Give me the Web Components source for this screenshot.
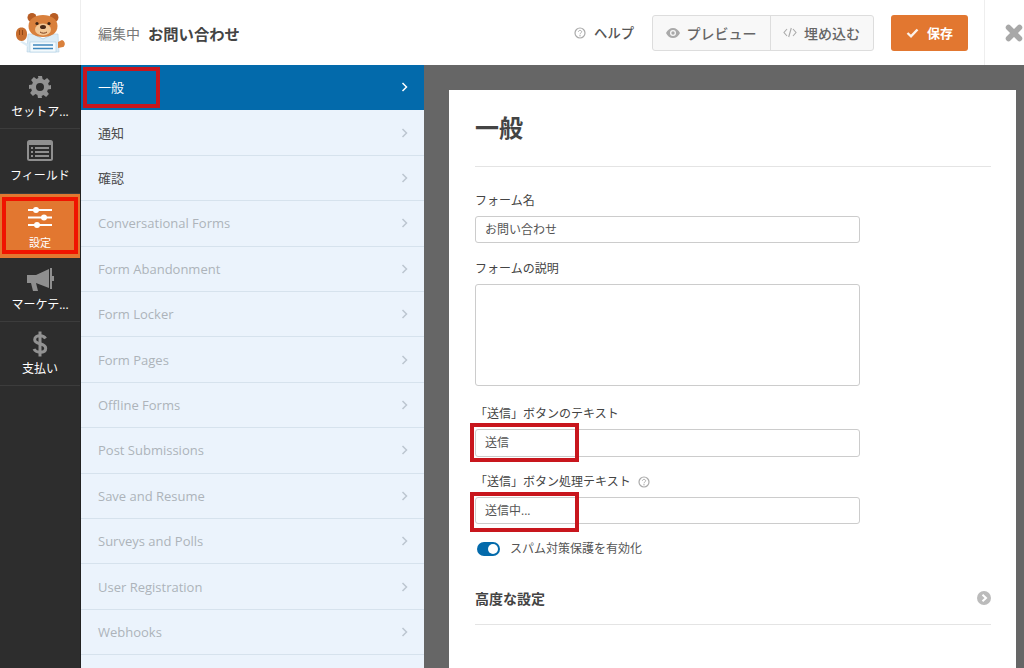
<!DOCTYPE html>
<html lang="ja"><head><meta charset="utf-8"><title>フォーム</title>
<style>
html,body{margin:0;padding:0;height:100%;overflow:hidden}
body{font-family:"Open Sans","Noto Sans CJK JP",sans-serif;background:#666}
</style></head><body>
<wf-app></wf-app>
<script>
const FONT='"Open Sans","Noto Sans CJK JP",sans-serif';
function def(name,html){
  customElements.define(name,class extends HTMLElement{
    constructor(){super();this.attachShadow({mode:'open'}).innerHTML=typeof html==='function'?html(this):html;}
  });
}
const BEAR=`<svg width="52" height="42" viewBox="0 0 52 42" aria-hidden="true">
<path d="M14 22h30l1 18H13z" fill="#dcecf6" stroke="#b9d4e6" stroke-width=".6"/>
<path d="M21 23l8 4 8-4z" fill="#fff" stroke="#a8c8dd" stroke-width=".8"/>
<rect x="16" y="30" width="26" height="10" fill="#f4fafd" stroke="#9fc6df" stroke-width=".5"/>
<path d="M19 33h20M19 36.500h20" stroke="#3f88bd" stroke-width="1.500"/>
<circle cx="18" cy="5.500" r="4.500" fill="#b85d24"/><circle cx="40" cy="5.500" r="4.500" fill="#b85d24"/>
<path d="M14.500 14c0-7 6.500-11 14.500-11s14.500 4 14.500 11-6 11-14.500 11-14.500-4-14.500-11z" fill="#d9803c"/>
<ellipse cx="29" cy="17.500" rx="8" ry="6" fill="#f3c795"/>
<circle cx="23" cy="11.500" r="1.600" fill="#3c2415"/><circle cx="35" cy="11.500" r="1.600" fill="#3c2415"/>
<ellipse cx="29" cy="15" rx="3" ry="2" fill="#4a2a18"/>
<path d="M26 20c2 1.600 5 1.600 7 0" stroke="#7a3d1c" fill="none" stroke-width="1"/>
<path d="M2 22c0-4 2-6.500 5.500-6.500S13 18 13 22s-2 7-5.500 7S2 26 2 22z" fill="#c96f30"/>
<path d="M5.500 18v5M8.500 18v5" stroke="#8d4719" stroke-width="1"/>
<path d="M8 29l6 3v3L6 30z" fill="#dcecf6"/>
<path d="M44 30l4-2c3 1 4 5 1 7l-5 1z" fill="#d9803c"/>
</svg>`;
const I={
 gear:`<svg width="24" height="24" viewBox="0 0 24 24"><path fill="#929292" fill-rule="evenodd" d="M10 1h4l.6 3.100 1.900.8 2.600-1.800 2.800 2.800-1.800 2.600.8 1.900L23 10v4l-3.100.6-.8 1.900 1.800 2.600-2.800 2.800-2.600-1.800-1.900.8L14 23h-4l-.6-3.100-1.900-.8-2.600 1.800-2.800-2.800 1.800-2.600-.8-1.900L1 14v-4l3.100-.6.8-1.900-1.800-2.600 2.800-2.800 2.600 1.800 1.900-.8zM12 8a4 4 0 1 0 0 8 4 4 0 0 0 0-8z"/></svg>`,
 list:`<svg width="26" height="21" viewBox="0 0 26 21"><rect width="26" height="21" rx="2.500" fill="#8f8f8f"/><rect x="2" y="5" width="22" height="14" fill="#2d2d2d"/><path d="M4 8h2M8 8h14M4 12h2M8 12h14M4 16h2M8 16h14" stroke="#8f8f8f" stroke-width="1.800"/></svg>`,
 sliders:`<svg width="24" height="21" viewBox="0 0 24 21"><path d="M0 3h24M0 10.500h24M0 18h24" stroke="#fff" stroke-width="2"/><circle cx="8" cy="3" r="3" fill="#fff"/><circle cx="16" cy="10.500" r="3" fill="#fff"/><circle cx="9" cy="18" r="3" fill="#fff"/></svg>`,
 horn:`<svg width="27" height="23" viewBox="0 0 27 23"><path fill="#8f8f8f" d="M0 7h9L22 1v19L9 15H0z"/><path fill="#8f8f8f" d="M4 15h5l2 8H6z"/><path fill="#8f8f8f" d="M23 0h2v21h-2zM25 8h2v5h-2z"/></svg>`,
 dollar:`<svg width="16" height="26" viewBox="0 0 16 26"><path d="M13.500 7.500C12.500 5.500 10.500 4.800 8 4.800c-3 0-5.300 1.400-5.300 3.900 0 5.300 11 2.700 11 8.500 0 2.600-2.500 4-5.700 4-2.800 0-5-1-6-3.200" fill="none" stroke="#929292" stroke-width="3"/><path d="M8 .5v25" stroke="#929292" stroke-width="3"/></svg>`,
 help:`<svg width="12" height="12" viewBox="0 0 12 12"><circle cx="6" cy="6" r="5" fill="none" stroke="#aaa" stroke-width="1.200"/><path d="M4.400 4.800C4.500 3.800 5.200 3.400 6 3.400c.9 0 1.600.5 1.600 1.300C7.600 6 6 6 6 7.300" fill="none" stroke="#aaa"/><circle cx="6" cy="8.800" r=".7" fill="#aaa"/></svg>`,
 eye:`<svg width="14" height="10" viewBox="0 0 14 10"><path fill-rule="evenodd" fill="#aaa" d="M7 0c3 0 5.600 2 7 5-1.400 3-4 5-7 5S1.400 8 0 5c1.400-3 4-5 7-5zm0 2a3 3 0 1 0 0 6 3 3 0 0 0 0-6z"/><circle cx="7" cy="5" r="1.700" fill="#aaa"/></svg>`,
 code:`<svg width="14" height="11" viewBox="0 0 14 11"><path d="M4 2L1 5.500 4 9M10 2l3 3.500L10 9M8.300 1L5.700 10" fill="none" stroke="#aaa" stroke-width="1.100"/></svg>`,
 check:`<svg width="13" height="10" viewBox="0 0 13 10"><path d="M1.500 5l3.500 3.300L11.500 1.500" fill="none" stroke="#fff" stroke-width="2.400" opacity=".9"/></svg>`,
 x:`<svg width="18" height="18" viewBox="0 0 18 18"><path d="M3.500 3.500l11 11M14.500 3.500l-11 11" stroke="#a8a8a8" stroke-width="5.500" stroke-linecap="round"/></svg>`,
 go:`<svg width="14" height="14" viewBox="0 0 14 14"><circle cx="7" cy="7" r="7" fill="#bbb"/><path d="M5.500 3.800L9 7l-3.500 3.200" fill="none" stroke="#fff" stroke-width="2"/></svg>`,
};
def('wf-rail-item',h=>`<style>
:host{display:flex;flex-direction:column;align-items:center;height:64.300px;box-sizing:border-box;border-bottom:1px solid #3c3c3c;color:#fff;font:12px/16px ${FONT};position:relative}
:host([active]){background:#e27730;border-bottom:0;padding-top:2px}
.i{height:35px;margin-top:4px;display:flex;align-items:center;justify-content:center}
:host([active]) .l{font-size:11px}
.l{white-space:nowrap}
</style><div class="i">${I[h.getAttribute('icon')]}</div><div class="l"><slot></slot></div>`);
def('wf-menu-item',h=>`<style>
:host{display:flex;align-items:center;justify-content:space-between;height:45.420px;box-sizing:border-box;padding:0 16px 0 17px;background:#ebf3fc;border-bottom:1px solid #d6e2ed;color:#4c4c4c;font:13px/18px ${FONT};flex:none}
:host([dim]){color:#adb3ba}
:host([active]){background:#036aab;color:#fff;border-bottom:0;padding-bottom:2px}
svg{display:block}
</style><span><slot></slot></span><svg width="7" height="10" viewBox="0 0 7 10"><path d="M1.500 1l4 4-4 4" fill="none" stroke="${h.hasAttribute('active')?'#fff':'#bcc6d0'}" stroke-width="1.500"/></svg>`);
def('wf-field',h=>`<style>
:host{display:block;font:12px/16px ${FONT};color:#444}
.lab{display:flex;align-items:center;gap:7px;height:16px;margin-bottom:7px}
.box{width:385px;box-sizing:border-box;height:var(--box-h,28px);border:1px solid #ccc;border-radius:3px;padding:0 9px;font-size:12px;line-height:26px;color:#555;background:#fff}
:host([area]) .box{height:102px}
svg{display:block}
</style><div class="lab"><span><slot name="label"></slot></span>${h.hasAttribute('help')?I.help:''}</div><div class="box"><slot></slot></div>`);
def('wf-toggle',`<style>
:host{display:flex;align-items:center;gap:10px;padding-left:2px;font:12px/16px ${FONT};color:#555}
.t{width:23px;height:14px;border-radius:7px;background:#036aab;position:relative;flex:none}
.k{position:absolute;right:2px;top:2px;width:10px;height:10px;border-radius:50%;background:#fff}
</style><span class="t"><span class="k"></span></span><span><slot></slot></span>`);
def('wf-mark',`<style>
:host{position:absolute;box-sizing:border-box;border:4px solid var(--c,#c8161d);pointer-events:none;display:block}
</style>`);
def('wf-app',()=>`<style>
:host{display:flex;flex-direction:column;width:1024px;height:668px;overflow:hidden;position:relative;font-family:${FONT}}
header{height:65px;flex:none;background:#fff;display:flex;align-items:center;color:#444}
.logo{width:80px;height:65px;border-right:1px solid #eee;display:flex;align-items:center;justify-content:center;flex:none}
.title{margin-left:17px;font-size:14px;flex:1;color:#777;white-space:nowrap;display:flex;align-items:center;gap:8px}
.title b{color:#444;font-weight:700;font-size:15.300px}
.help{display:flex;align-items:center;gap:8px;font-size:13.300px;color:#555;font-weight:500;margin-right:18px}
.grp{display:flex;height:36px;border:1px solid #ddd;border-radius:3px;background:#f8f8f8;box-sizing:border-box;margin-right:17px;font-size:14px;font-weight:500;color:#666}
.grp span{display:flex;align-items:center;gap:7px;padding:0 13px 0 12.500px}
.grp span+span{border-left:1px solid #ddd;padding:0 13px 0 12.500px}
.save{width:77px;height:36px;border-radius:3px;background:#e27730;color:#fff;font-size:13px;font-weight:700;display:flex;align-items:center;justify-content:center;gap:8px;margin-right:16px;box-sizing:border-box}
.close{width:40px;height:65px;border-left:1px solid #eee;display:flex;align-items:center;justify-content:center;flex:none;box-sizing:border-box;padding-left:18px}
main{flex:1;display:flex;min-height:0}
nav{width:81px;background:#2d2d2d;flex:none;box-sizing:border-box;border-right:1px solid #222}
.menu{width:343px;flex:none;display:flex;flex-direction:column;overflow:hidden;background:#ebf3fc}
.stage{flex:1;background:#666;padding:25px 8px 0 25px;min-width:0;overflow:hidden}
.panel{background:#fff;height:100%;box-sizing:border-box;padding:23px 25px 0 26px}
h1{margin:0;font-size:24px;line-height:30px;font-weight:700;color:#444;padding-bottom:23px;border-bottom:1px solid #e4e4e4}
wf-field.first{margin-top:26px;margin-bottom:18px;--box-h:27px}
wf-field.area{margin-bottom:20px}
wf-field.third{margin-bottom:17px}
wf-field.fourth{margin-bottom:17px;--box-h:27px}
.adv{display:flex;align-items:center;justify-content:space-between;margin-top:31px;height:20px;padding-bottom:16px;border-bottom:1px solid #e4e4e4;font-size:14px;font-weight:700;color:#444}
</style>
<header>
 <div class="logo">${BEAR}</div>
 <div class="title"><span>編集中</span><b>お問い合わせ</b></div>
 <div class="help">${I.help}<span>ヘルプ</span></div>
 <div class="grp"><span>${I.eye}プレビュー</span><span>${I.code}埋め込む</span></div>
 <div class="save">${I.check}<span>保存</span></div>
 <div class="close">${I.x}</div>
</header>
<main>
 <nav>
  <wf-rail-item icon="gear">セットア...</wf-rail-item>
  <wf-rail-item icon="list">フィールド</wf-rail-item>
  <wf-rail-item icon="sliders" active>設定</wf-rail-item>
  <wf-rail-item icon="horn">マーケテ...</wf-rail-item>
  <wf-rail-item icon="dollar">支払い</wf-rail-item>
 </nav>
 <div class="menu">
  <wf-menu-item active>一般</wf-menu-item>
  <wf-menu-item>通知</wf-menu-item>
  <wf-menu-item>確認</wf-menu-item>
  <wf-menu-item dim>Conversational Forms</wf-menu-item>
  <wf-menu-item dim>Form Abandonment</wf-menu-item>
  <wf-menu-item dim>Form Locker</wf-menu-item>
  <wf-menu-item dim>Form Pages</wf-menu-item>
  <wf-menu-item dim>Offline Forms</wf-menu-item>
  <wf-menu-item dim>Post Submissions</wf-menu-item>
  <wf-menu-item dim>Save and Resume</wf-menu-item>
  <wf-menu-item dim>Surveys and Polls</wf-menu-item>
  <wf-menu-item dim>User Registration</wf-menu-item>
  <wf-menu-item dim>Webhooks</wf-menu-item>
 </div>
 <div class="stage"><div class="panel">
  <h1>一般</h1>
  <wf-field class="first"><span slot="label">フォーム名</span>お問い合わせ</wf-field>
  <wf-field class="area" area><span slot="label">フォームの説明</span></wf-field>
  <wf-field class="third"><span slot="label">「送信」ボタンのテキスト</span>送信</wf-field>
  <wf-field class="fourth" help><span slot="label">「送信」ボタン処理テキスト</span>送信中...</wf-field>
  <wf-toggle>スパム対策保護を有効化</wf-toggle>
  <div class="adv"><span>高度な設定</span>${I.go}</div>
 </div></div>
</main>
<wf-mark style="left:83px;top:67px;width:77px;height:41px"></wf-mark>
<wf-mark style="left:2px;top:197px;width:76px;height:57px;--c:#f01400"></wf-mark>
<wf-mark style="left:470px;top:423px;width:109px;height:39px"></wf-mark>
<wf-mark style="left:470px;top:492px;width:109px;height:40px"></wf-mark>
`);
</script>
</body></html>
